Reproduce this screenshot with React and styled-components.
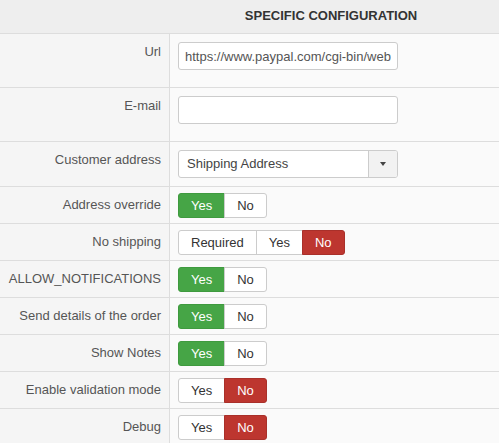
import React from "react";
import styled, { createGlobalStyle } from "styled-components";

const GlobalStyle = createGlobalStyle`
  html, body {
    margin: 0;
    padding: 0;
    background: #ffffff;
  }
  body {
    font-family: "Liberation Sans", Arial, sans-serif;
    font-size: 13px;
    color: #555;
  }
`;

const Frame = styled.div`
  width: 100vw;
  height: 100vh;
  overflow: hidden;
`;

const ConfigTable = styled.div`
  width: 662px;
  display: grid;
  grid-template-columns: 170px 1fr;
`;

const HeadCell = styled.div`
  grid-column: 1 / -1;
  background: #eeeeee;
  padding: 7px 8px 8px;
  line-height: 18px;
  font-size: 13px;
  font-weight: 700;
  color: #333;
  text-align: center;
`;

const LabelCell = styled.div`
  background: #f5f5f5;
  border-top: 1px solid #dddddd;
  border-right: 1px solid #dddddd;
  padding: 9px 8px 0 8px;
  line-height: 18px;
  text-align: right;
  color: #555;
`;

const FieldCell = styled.div`
  background: #fafafa;
  border-top: 1px solid #dddddd;
  padding: ${(p) => (p.$compact ? "6px 8px 5px" : "8px 8px")};
  display: flex;
  align-items: flex-start;
`;

const TextInput = styled.input`
  box-sizing: border-box;
  width: 220px;
  height: 28px;
  margin: 0 0 9px;
  padding: 4px 6px;
  border: 1px solid #cccccc;
  border-radius: 3px;
  background: #ffffff;
  font: 13px "Liberation Sans", Arial, sans-serif;
  color: #555;
  outline: none;
`;

const Select = styled.div`
  box-sizing: border-box;
  width: 220px;
  height: 28px;
  display: flex;
  border: 1px solid #cccccc;
  border-radius: 3px;
  background: #ffffff;
  overflow: hidden;
`;

const SelectValue = styled.span`
  flex: 1;
  padding: 0 8px;
  line-height: 26px;
  color: #444;
`;

const SelectArrow = styled.span`
  width: 28px;
  border-left: 1px solid #cccccc;
  background: #f2f2f2;
  display: flex;
  align-items: center;
  justify-content: center;

  &::after {
    content: "";
    border-left: 3.5px solid transparent;
    border-right: 3.5px solid transparent;
    border-top: 4px solid #444;
  }
`;

const ButtonGroup = styled.div`
  display: inline-flex;
`;

const tones = {
  yes: { bg: "#46a546", border: "#3f9a3f", color: "#ffffff" },
  no: { bg: "#bd362f", border: "#a9302a", color: "#ffffff" },
  off: { bg: "#ffffff", border: "#cccccc", color: "#333333" },
};

const ToggleButton = styled.span`
  box-sizing: border-box;
  padding: 3px 12px;
  line-height: 17px;
  font-size: 13px;
  background: ${(p) => tones[p.$tone].bg};
  color: ${(p) => tones[p.$tone].color};
  border: 1px solid ${(p) => tones[p.$tone].border};
  margin-left: -1px;

  &:first-child {
    margin-left: 0;
    border-radius: 3px 0 0 3px;
  }
  &:last-child {
    border-radius: 0 3px 3px 0;
  }
`;

const rows = [
  { label: "Url", kind: "input", value: "https://www.paypal.com/cgi-bin/webscr" },
  { label: "E-mail", kind: "input", value: "" },
  { label: "Customer address", kind: "select", value: "Shipping Address" },
  { label: "Address override", kind: "toggle", options: ["Yes", "No"], active: 0 },
  { label: "No shipping", kind: "toggle", options: ["Required", "Yes", "No"], active: 2 },
  { label: "ALLOW_NOTIFICATIONS", kind: "toggle", options: ["Yes", "No"], active: 0 },
  { label: "Send details of the order", kind: "toggle", options: ["Yes", "No"], active: 0 },
  { label: "Show Notes", kind: "toggle", options: ["Yes", "No"], active: 0 },
  { label: "Enable validation mode", kind: "toggle", options: ["Yes", "No"], active: 1 },
  { label: "Debug", kind: "toggle", options: ["Yes", "No"], active: 1 },
];

function toneFor(option, selected) {
  if (!selected) return "off";
  return option === "No" ? "no" : "yes";
}

function Field({ row }) {
  if (row.kind === "input") {
    return <TextInput type="text" defaultValue={row.value} />;
  }
  if (row.kind === "select") {
    return (
      <Select>
        <SelectValue>{row.value}</SelectValue>
        <SelectArrow />
      </Select>
    );
  }
  return (
    <ButtonGroup>
      {row.options.map((opt, i) => (
        <ToggleButton key={opt} $tone={toneFor(opt, i === row.active)}>
          {opt}
        </ToggleButton>
      ))}
    </ButtonGroup>
  );
}

export default function App() {
  return (
    <Frame>
      <GlobalStyle />
      <ConfigTable>
        <HeadCell>SPECIFIC CONFIGURATION</HeadCell>
        {rows.map((row) => (
          <React.Fragment key={row.label}>
            <LabelCell>{row.label}</LabelCell>
            <FieldCell $compact={row.kind === "toggle"}>
              <Field row={row} />
            </FieldCell>
          </React.Fragment>
        ))}
      </ConfigTable>
    </Frame>
  );
}
